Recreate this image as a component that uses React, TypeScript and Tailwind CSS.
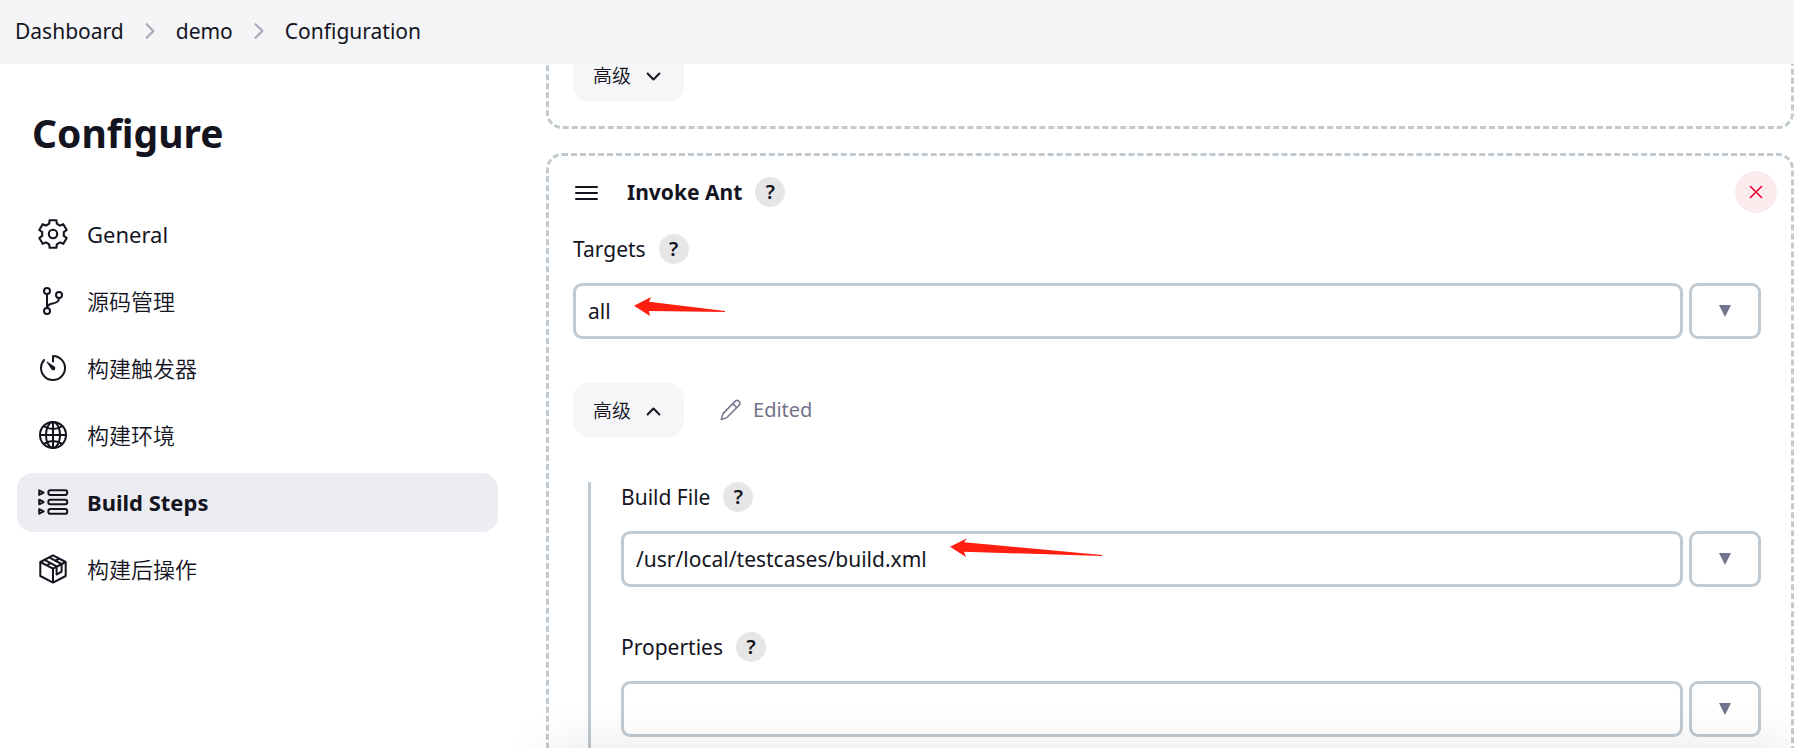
import { ReactNode } from "react";
import {
  IoChevronDown,
  IoChevronForward,
  IoChevronUp,
  IoGitBranchOutline,
  IoGlobeOutline,
  IoTimerOutline,
} from "react-icons/io5";

const GearIcon = () => (
  <svg viewBox="0 0 32 32" className="size-8" fill="none" stroke="currentColor" strokeWidth="2.1" strokeLinejoin="round">
    <path d="M12.2 5.7 12.6 2.2h6.8l.4 3.5 3.2 1.9 3.3-1.4 3.4 5.8-2.9 2.1v3.8l2.9 2.1-3.4 5.8-3.3-1.4-3.2 1.9-.4 3.5h-6.8l-.4-3.5L9 24.4l-3.3 1.4L2.3 20l2.9-2.1v-3.8L2.3 12l3.4-5.8L9 7.6z" />
    <circle cx="16" cy="16" r="4.2" />
  </svg>
);

const StepsIcon = () => (
  <svg viewBox="0 0 32 32" className="size-8" fill="none" stroke="currentColor" strokeWidth="2" strokeLinejoin="round">
    <path d="M2.2 4.3v4.6l4.4-2.3zM2.2 13.7v4.6L6.6 16zM2.2 23.1v4.6l4.4-2.3z" />
    <rect x="11.4" y="4.3" width="18.8" height="4.6" rx="1.8" />
    <rect x="11.4" y="13.7" width="18.8" height="4.6" rx="1.8" />
    <rect x="11.4" y="23.1" width="18.8" height="4.6" rx="1.8" />
  </svg>
);

const PackageIcon = () => (
  <svg viewBox="0 0 32 32" className="size-8" fill="none" stroke="currentColor" strokeWidth="2" strokeLinejoin="round">
    <path d="M16 2.4 28.7 9v14L16 29.6 3.3 23V9z" />
    <path d="M3.3 9 16 15.6 28.7 9M16 15.6v14" />
    <path d="M7.5 6.8 19.6 13.4v8.2l5-3V11L12.2 4.4" />
    <path d="m9.6 12.3 4.2-2.2M18.2 7.9l4.1-2.2" />
  </svg>
);

const PencilIcon = () => (
  <svg viewBox="0 0 22 22" className="size-[22px]" fill="none" stroke="currentColor" strokeWidth="1.5" strokeLinejoin="round">
    <path d="M1.2 20.6 3 14.6 14.8 2.6c1.2-1.3 3-1.5 4.2-.4 1.2 1.2 1 3-.2 4.3L7 18.6z" />
    <path d="m12.8 4.6 4.1 4.1" />
  </svg>
);

type NavItem = { label: string; lang: string; icon: ReactNode; active?: boolean };

const navItems: NavItem[] = [
  { label: "General", lang: "en", icon: <GearIcon /> },
  { label: "源码管理", lang: "zh-CN", icon: <IoGitBranchOutline className="size-8" /> },
  { label: "构建触发器", lang: "zh-CN", icon: <IoTimerOutline className="size-8" /> },
  { label: "构建环境", lang: "zh-CN", icon: <IoGlobeOutline className="size-8" /> },
  { label: "Build Steps", lang: "en", icon: <StepsIcon />, active: true },
  { label: "构建后操作", lang: "zh-CN", icon: <PackageIcon /> },
];

const HelpButton = ({ topic }: { topic: string }) => (
  <button
    type="button"
    aria-label={`Help for feature: ${topic}`}
    className="flex size-[30px] items-center justify-center rounded-full bg-[#e6e6e6] text-xl font-semibold leading-none"
  >
    ?
  </button>
);

const AdvancedButton = ({ open }: { open?: boolean }) => (
  <button
    type="button"
    lang="zh-CN"
    className="flex h-[54px] items-center gap-3 rounded-2xl bg-[#f6f6f9] px-5 pt-0.5 text-[19px] font-[350] leading-none"
  >
    高级
    {open ? <IoChevronUp className="size-[21px]" /> : <IoChevronDown className="size-[21px]" />}
  </button>
);

type FieldProps = { id: string; label: string; value: string; children?: ReactNode };

const Field = ({ id, label, value, children }: FieldProps) => (
  <div>
    <div className="flex h-[30px] items-center gap-[13px]">
      <label htmlFor={id}>{label}</label>
      <HelpButton topic={label} />
    </div>
    <div className="relative mt-[19px] flex gap-1.5">
      <input
        id={id}
        defaultValue={value}
        className="h-14 min-w-0 flex-1 rounded-[9px] border-3 border-[#c1cad0] bg-white px-3 outline-none"
      />
      <button
        type="button"
        aria-label={`Expand ${label}`}
        className="flex h-14 w-[72px] items-center justify-center rounded-[9px] border-3 border-[#c1cad0] bg-white text-[#73738c]"
      >
        <svg viewBox="0 0 12 12" className="size-3" fill="currentColor">
          <path d="M0 0h12L6 12z" />
        </svg>
      </button>
      {children}
    </div>
  </div>
);

const App = () => {
  return (
    <div className="flex h-screen flex-col overflow-hidden bg-white font-['Noto_Sans','Noto_Sans_CJK_SC',sans-serif] text-[21px] leading-7 text-[#14141f]">
      <header className="h-16 shrink-0 bg-[#f5f5f8] px-[15px]">
        <nav aria-label="Breadcrumb" className="flex h-[61px] items-center gap-3.5">
          <a href="#dashboard">Dashboard</a>
          <IoChevronForward className="size-6 text-[#a9a9bd]" />
          <a href="#demo">demo</a>
          <IoChevronForward className="size-6 text-[#a9a9bd]" />
          <a href="#configuration">Configuration</a>
        </nav>
      </header>

      <div className="flex min-h-0 flex-1 gap-12">
        <aside className="w-[498px] shrink-0 pl-[17px]">
          <h1 className="mt-[43px] pl-[15px] text-[39px] font-bold leading-[52px]">Configure</h1>
          <nav aria-label="Sections" className="mt-[46px] flex flex-col gap-2">
            {navItems.map((item) => (
              <a
                key={item.label}
                href={`#${item.label}`}
                lang={item.lang}
                className={`flex h-[59px] items-center gap-[18px] rounded-2xl px-5 pb-0.5 text-[22px] ${
                  item.active ? "bg-[#ecedf3] font-bold" : "[&:lang(zh)]:font-[350]"
                }`}
              >
                {item.icon}
                {item.label}
              </a>
            ))}
          </nav>
        </aside>

        <main className="flex min-w-0 flex-1 flex-col gap-6 overflow-hidden">
          {/* previous step, scrolled under the header */}
          <section className="-mt-10 shrink-0 rounded-2xl border-3 border-dashed border-[#c1cad0] px-6 pb-6 pt-[21px]">
            <AdvancedButton />
          </section>

          <section className="shrink-0 rounded-2xl border-3 border-dashed border-[#c1cad0] pb-10 pl-6 pr-[30px] pt-[15px]">
            <div className="-mr-4 flex items-center">
              <button type="button" aria-label="Drag step" className="mr-[27px]">
                <svg viewBox="0 0 27 27" className="size-[27px]" stroke="currentColor" strokeWidth="2" strokeLinecap="round">
                  <path d="M3 8h21M3 14h21M3 20h21" />
                </svg>
              </button>
              <h2 className="mr-[13px] font-bold">Invoke Ant</h2>
              <HelpButton topic="Invoke Ant" />
              <button
                type="button"
                aria-label="Delete step"
                className="ml-auto flex size-[42px] items-center justify-center rounded-full bg-[#fceaec] text-[#e6002e]"
              >
                <svg viewBox="0 0 14 14" className="size-3.5" stroke="currentColor" strokeWidth="1.6" strokeLinecap="round">
                  <path d="m1.5 1.5 11 11M12.5 1.5l-11 11" />
                </svg>
              </button>
            </div>

            <div className="mt-[21px]">
              <Field id="targets" label="Targets" value="all">
                <svg viewBox="0 0 92 20" className="pointer-events-none absolute left-[61px] top-[13px] h-5 w-[92px]" fill="#ff1f10">
                  <path d="m0 9.7 17-8.7-2 4.8 76 9.2v1l-76-1 1 5z" />
                </svg>
              </Field>
            </div>

            <div className="mt-11 flex items-center">
              <AdvancedButton open />
              <span className="ml-9 flex items-center gap-[11px] text-xl text-[#73738c]">
                <PencilIcon />
                Edited
              </span>
            </div>

            <div className="ml-[15px] mt-[45px] flex flex-col gap-[45px] border-l-3 border-[#c1cad0] pb-10 pl-[30px]">
              <Field id="build-file" label="Build File" value="/usr/local/testcases/build.xml">
                <svg viewBox="0 0 153 20" className="pointer-events-none absolute left-[329px] top-[7px] h-5 w-[153px]" fill="#ff1f10">
                  <path d="M0 8.7 17 .3l-3 4 138 12.7v1L14 13.7l2 5.3z" />
                </svg>
              </Field>
              <Field id="properties" label="Properties" value="" />
            </div>
          </section>
        </main>
      </div>

      {/* shadow cast by the save bar below the fold */}
      <div className="pointer-events-none absolute left-[546px] right-0 top-full h-16 shadow-[0_0_50px_rgba(0,0,0,0.1)]" />
    </div>
  );
};

export default App;
